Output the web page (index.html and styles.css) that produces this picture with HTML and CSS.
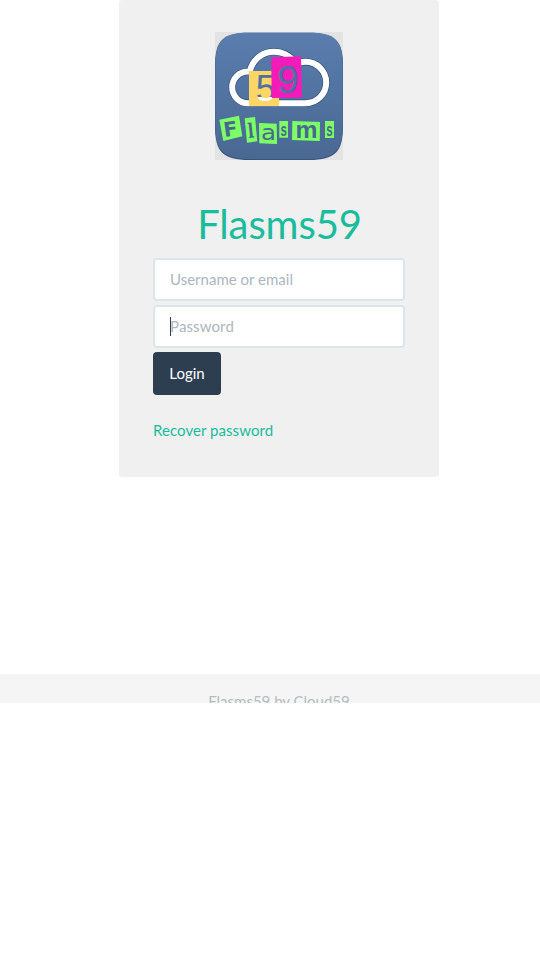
FILE: index.html
```html
<!DOCTYPE html>
<html lang="en">
<head>
<meta charset="utf-8">
<title>Flasms59</title>
<link rel="stylesheet" href="styles.css">
</head>
<body>
<div class="page">
  <main class="card">
    <svg class="logo" viewBox="0 0 128 128" role="img" aria-label="Flasms59">
      <defs>
        <linearGradient id="sky" x1="0" y1="0" x2="0" y2="1">
          <stop offset="0" stop-color="#5a7dae"/>
          <stop offset="1" stop-color="#496993"/>
        </linearGradient>
        <linearGradient id="cut" gradientUnits="userSpaceOnUse" x1="0" y1="43" x2="0" y2="69">
          <stop offset=".83" stop-color="#50719f"/>
          <stop offset=".85" stop-color="#fff"/>
        </linearGradient>
      </defs>
      <rect width="128" height="128" fill="#e3e3e3"/>
      <path d="M0 34C0 8 8 1 34 1H94C120 1 128 8 128 34V94C128 120 120 128 94 128H34C8 128 0 120 0 94Z" fill="#37527c"/>
      <path d="M.3 34C.3 8.500 8.500 .6 34 .6H94C119.500 .6 127.700 8.500 127.700 34V93C127.700 119 119 127 94 127H34C9 127 .3 119 .3 93Z" fill="url(#sky)"/>
      <g fill="none" stroke-linejoin="round">
        <path d="M33 71.200A15.850 15.850 0 0 1 33 39.500H34.800A25 25 0 0 1 80.500 31.500Q85 29.800 90.500 29.800A20.700 20.700 0 0 1 90.500 71.200Z" stroke="#304e7a" stroke-width="7.200"/>
        <path d="M33 71.200A15.850 15.850 0 0 1 33 39.500H34.800A25 25 0 0 1 80.500 31.500Q85 29.800 90.500 29.800A20.700 20.700 0 0 1 90.500 71.200Z" stroke="#fff" stroke-width="6"/>
      </g>
      <path d="M34 39H64V74H34Z" fill="#ffd666"/>
      <text class="digit" x="40.800" y="68.500" font-size="36" fill="url(#cut)">5</text>
      <path d="M56.300 25.300L86 24.300L87 65.700L56.700 66Z" fill="#f31bb9"/>
      <text class="digit" x="62" y="61" font-size="39" fill="#50719f">9</text>
      <g fill="#7dff66">
        <path d="M4.300 87.700L24 83.700L27.300 104.300L8.300 109Z"/>
        <path d="M29.700 86.300L40 85L42.300 109.300L32 110.700Z"/>
        <path d="M44 91L61.700 91.700L62 112L44.300 111.300Z"/>
        <path d="M64.300 89H73V105.700H64.300Z"/>
        <path d="M77.300 89L105 90L104.700 109L77 108Z"/>
        <path d="M110 89H119V106H110Z"/>
      </g>
      <g fill="#48698f">
        <text class="block" transform="translate(9.500 105) rotate(-8)" font-size="20" textLength="14" lengthAdjust="spacingAndGlyphs">F</text>
        <text class="slab" transform="translate(33.600 106) rotate(-6)" font-size="20" textLength="6" lengthAdjust="spacingAndGlyphs">l</text>
        <text class="thin" x="46" y="107.500" font-size="22" textLength="15" lengthAdjust="spacingAndGlyphs">a</text>
        <text class="digit heavy" x="65.500" y="104" font-size="18" textLength="6.500" lengthAdjust="spacingAndGlyphs">s</text>
        <text class="digit heavy" x="80.500" y="106" font-size="24" textLength="22" lengthAdjust="spacingAndGlyphs">m</text>
        <text class="digit heavy" x="111.200" y="104" font-size="18" textLength="6.500" lengthAdjust="spacingAndGlyphs">s</text>
      </g>
    </svg>
    <h1 class="title">Flasms59</h1>
    <form class="login">
      <input class="field" type="text" placeholder="Username or email">
      <div class="focus-wrap">
        <input class="field password" type="password" placeholder="Password">
        <span class="caret"></span>
      </div>
      <button class="submit" type="button">Login</button>
    </form>
    <a class="recover" href="#">Recover password</a>
  </main>
  <footer class="footer">Flasms59 by Cloud59</footer>
</div>
</body>
</html>
```
FILE: styles.css
```css
* { box-sizing: border-box; }
html { overflow: hidden; background: #fff; }
body {
  margin: 0;
  overflow: hidden;
  font: 15px/21px Lato, "Liberation Sans", sans-serif;
  color: #2c3e50;
}
.page {
  width: 558px;
  height: 703px;
  overflow: hidden;
  display: flex;
  flex-direction: column;
  align-items: center;
  justify-content: space-between;
}
.card {
  width: 320px;
  height: 477px;
  padding: 32px 34px 0;
  background: #f0f0f0;
  border-radius: 3px;
}
.logo { display: block; width: 128px; height: 128px; margin: 0 auto; }
.digit { font-family: "Liberation Sans", sans-serif; }
.heavy { font-weight: 700; }
.slab { font-family: "DejaVu Serif", serif; font-weight: 700; }
.block { font-family: "DejaVu Sans", sans-serif; font-weight: 700; }
.thin { font-family: "DejaVu Sans", sans-serif; }
.title {
  margin: 42px 0 12px;
  font-size: 40px;
  line-height: 44px;
  font-weight: 400;
  letter-spacing: -0.1px;
  text-indent: 1px;
  text-align: center;
  color: #1abc9c;
}
.login { display: flex; flex-direction: column; gap: 4px; }
.field {
  display: block;
  width: 100%;
  height: 43px;
  padding: 0 15px 2px;
  border: 2px solid #dce4ec;
  border-radius: 4px;
  background: #fff;
  font: inherit;
  letter-spacing: 0.01px;
  color: #2c3e50;
}
.password { letter-spacing: 0.12px; }
.field::placeholder { color: #acb6c0; opacity: 1; }
.focus-wrap { position: relative; }
.caret {
  position: absolute;
  left: 17px;
  top: 12px;
  width: 1px;
  height: 19px;
  background: #2c3e50;
}
.submit {
  width: 68px;
  height: 43px;
  padding: 0;
  border: 0;
  border-radius: 4px;
  background: #2c3e50;
  color: #fff;
  font: inherit;
}
.recover {
  display: block;
  margin-top: 25px;
  letter-spacing: 0.06px;
  color: #18bc9c;
  text-decoration: none;
}
.footer {
  width: 100%;
  height: 29px;
  padding-top: 17px;
  overflow: hidden;
  background: #f5f5f5;
  color: #b4bcc2;
  text-align: center;
}
```
